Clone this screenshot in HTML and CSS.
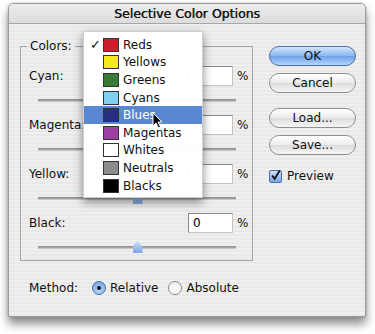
FILE: index.html
```html
<html>
<head>
  <title>Selective Color Options</title>
  <link rel="stylesheet" href="styles.css">
</head>
<body>
  <div class="window">
    <div class="titlebar">Selective Color Options</div>
    <div class="content">
      <div class="main">
        <fieldset class="group">
          <legend>Colors:</legend>

          <div class="row">
            <div class="field-line">
              <label>Cyan:</label>
              <input type="text" class="num" value="">
              <span class="pct">%</span>
            </div>
            <div class="slider"><span class="thumb"></span></div>
          </div>

          <div class="row">
            <div class="field-line">
              <label>Magenta:</label>
              <input type="text" class="num" value="">
              <span class="pct">%</span>
            </div>
            <div class="slider"><span class="thumb"></span></div>
          </div>

          <div class="row">
            <div class="field-line">
              <label>Yellow:</label>
              <input type="text" class="num" value="">
              <span class="pct">%</span>
            </div>
            <div class="slider"><span class="thumb"></span></div>
          </div>

          <div class="row">
            <div class="field-line">
              <label>Black:</label>
              <input type="text" class="num" value="0">
              <span class="pct">%</span>
            </div>
            <div class="slider"><span class="thumb"></span></div>
          </div>
        </fieldset>

        <div class="method">
          <span>Method:</span>
          <span class="radio checked"></span>
          <span class="radio-label">Relative</span>
          <span class="radio"></span>
          <span class="radio-label">Absolute</span>
        </div>
      </div>

      <div class="side">
        <button class="btn default">OK</button>
        <button class="btn">Cancel</button>
        <button class="btn spaced">Load...</button>
        <button class="btn">Save...</button>
        <div class="preview">
          <span class="checkbox">
            <svg width="13" height="13" viewBox="0 0 13 13"><path d="M2.5 6.5 L5.5 10.5 L11.5 0.5" fill="none" stroke="#111" stroke-width="2.2"/></svg>
          </span>
          <span>Preview</span>
        </div>
      </div>

      <!-- open popup menu -->
      <ul class="menu">
        <li><span class="check">&#10003;</span><span class="swatch sw-red"></span>Reds</li>
        <li><span class="check"></span><span class="swatch sw-yellow"></span>Yellows</li>
        <li><span class="check"></span><span class="swatch sw-green"></span>Greens</li>
        <li><span class="check"></span><span class="swatch sw-cyan"></span>Cyans</li>
        <li class="active"><span class="check"></span><span class="swatch sw-blue"></span>Blues</li>
        <li><span class="check"></span><span class="swatch sw-magenta"></span>Magentas</li>
        <li><span class="check"></span><span class="swatch sw-white"></span>Whites</li>
        <li><span class="check"></span><span class="swatch sw-gray"></span>Neutrals</li>
        <li><span class="check"></span><span class="swatch sw-black"></span>Blacks</li>
      </ul>

      <svg class="cursor" width="11" height="17" viewBox="0 0 11 17">
        <path d="M1 1 L1 14 L4 11 L6.5 16 L8.5 15 L6 10 L10 10 Z" fill="#000" stroke="#fff" stroke-width="1"/>
      </svg>
    </div>
  </div>
</body>
</html>
```

FILE: styles.css
```css
/* Page */
body {
  margin: 0;
  background: #fff;
  font-family: "DejaVu Sans", Verdana, sans-serif;
  font-size: 12px;
  color: #111;
}

/* Window frame */
.window {
  margin: 3px 0 0 8px;
  width: 358px;
  height: 314px;
  box-sizing: border-box;
  border: 1px solid #9c9c9c;
  border-radius: 5px 5px 0 0;
  background: repeating-linear-gradient(#efefef 0 2px, #e9e9e9 2px 4px);
  box-shadow: 0 7px 10px rgba(0, 0, 0, 0.45), 0 0 3px rgba(0, 0, 0, 0.2);
}

.titlebar {
  height: 19px;
  line-height: 19px;
  text-align: center;
  font-size: 12.5px;
  color: #1a1a1a;
  text-shadow: 0.4px 0 0 #1a1a1a;
  border-radius: 5px 5px 0 0;
  border-bottom: 1px solid #a6a6a6;
  background: linear-gradient(#ececec, #dcdcdc);
}

/* Content area */
.content {
  position: relative;
  display: flex;
  padding-left: 11px;
}

.main {
  width: 233px;
}

/* Colors group */
.group {
  margin: 14px 0 0 0;
  padding: 12px 3px 6px 8px;
  border: 1px solid #a4a4a4;
  min-width: 0;
}

.group legend {
  padding: 0 3px;
  margin-left: -2px;
  line-height: 16px;
}

.row {
  margin-bottom: 8px;
}

.row:last-child {
  margin-bottom: 0;
}

.field-line {
  display: flex;
  align-items: center;
  height: 20px;
}

.field-line label {
  flex: 1;
}

.num {
  width: 45px;
  height: 20px;
  box-sizing: border-box;
  border: 1px solid #8a8a8a;
  border-right-color: #c4c4c4;
  border-bottom-color: #c4c4c4;
  background: #fff;
  font-family: "DejaVu Sans", sans-serif;
  font-size: 12px;
  padding: 0 4px;
  margin: 0;
}

.pct {
  width: 12px;
  margin-left: 4px;
}

/* Slider */
.slider {
  height: 14px;
  margin: 7px 13px 0 9px;
  display: flex;
  justify-content: center;
  align-items: center;
  background: linear-gradient(transparent 6px, #8d8d8d 6px, #a9a9a9 8px, #e4e4e4 9px, transparent 9px);
}

.thumb {
  width: 10px;
  height: 12px;
  margin-left: 1px;
  background: linear-gradient(#c8dcf8, #7ea6e6);
  clip-path: polygon(50% 0, 100% 45%, 100% 100%, 0 100%, 0 45%);
}

/* Method row */
.method {
  display: flex;
  align-items: center;
  height: 20px;
  margin: 17px 0 0 9px;
}

.radio {
  width: 12px;
  height: 12px;
  border-radius: 50%;
  border: 1px solid #8a8a8a;
  background: linear-gradient(#f0f0f0, #fff);
  margin: 0 4px 0 10px;
  display: flex;
  align-items: center;
  justify-content: center;
}

.method span:first-child + .radio {
  margin-left: 14px;
}

.radio.checked {
  border-color: #4d6fa7;
  background: radial-gradient(circle at 50% 70%, #b8d6fb, #6f9ee2);
}

.radio.checked::after {
  content: "";
  width: 4px;
  height: 4px;
  border-radius: 50%;
  background: #111;
}

/* Right column */
.side {
  display: flex;
  flex-direction: column;
  padding-top: 22px;
  margin-left: 16px;
  width: 87px;
}

.btn {
  height: 20px;
  margin: 0 0 7px 0;
  padding: 0;
  border: 1px solid #8f8f8f;
  border-radius: 10px;
  font-family: "DejaVu Sans", sans-serif;
  font-size: 12px;
  color: #111;
  background: linear-gradient(#ffffff, #ececec 48%, #dcdcdc 52%, #f6f6f6);
}

.btn.default {
  border-color: #4a6ea8;
  background: linear-gradient(#d3e5fb, #8db7ee 48%, #6fa2e6 52%, #b3d6fb);
}

.btn.spaced {
  margin-top: 8px;
}

.preview {
  display: flex;
  align-items: center;
  margin-top: 7px;
}

.checkbox {
  width: 13px;
  height: 13px;
  box-sizing: border-box;
  border: 1px solid #4d6fa7;
  border-radius: 2px;
  background: linear-gradient(#c9def9, #7aa8e8);
  margin-right: 5px;
  display: flex;
}

.checkbox svg {
  margin: -2px 0 0 0;
}

/* Popup menu */
.menu {
  position: absolute;
  left: 74px;
  top: 7px;
  width: 120px;
  height: 167px;
  box-sizing: border-box;
  margin: 0;
  padding: 4px 0 0 0;
  list-style: none;
  background: rgba(255, 255, 255, 0.97);
  border: 1px solid #cfcfcf;
  box-shadow: 0 4px 9px rgba(0, 0, 0, 0.45);
}

.menu li {
  height: 17.6px;
  display: flex;
  align-items: center;
}

.menu li.active {
  background: #5a87d2;
  color: #fff;
}

.check {
  width: 13px;
  padding-left: 6px;
  font-size: 13px;
}

.swatch {
  width: 16px;
  height: 14px;
  box-sizing: border-box;
  border: 1px solid #333;
  margin-right: 4px;
}

.sw-red { background: #cc1e2b; }
.sw-yellow { background: #f7ea1c; }
.sw-green { background: #3b7a35; }
.sw-cyan { background: #80d0f2; }
.sw-blue { background: #26307c; }
.sw-magenta { background: #9c40a2; }
.sw-white { background: #fff; }
.sw-gray { background: #8c8c8c; }
.sw-black { background: #000; }

.cursor {
  position: absolute;
  left: 143px;
  top: 88px;
}
```
